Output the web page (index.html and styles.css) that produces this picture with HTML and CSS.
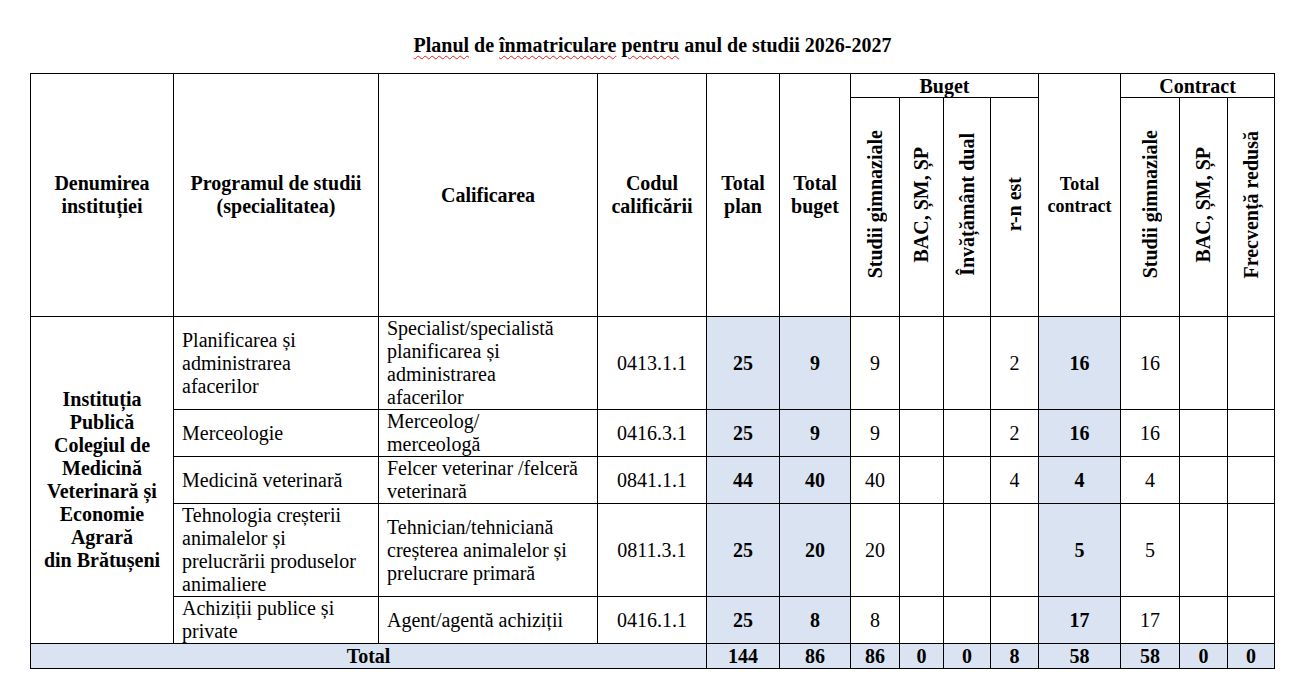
FILE: index.html
```html
<!DOCTYPE html>
<html lang="ro">
<head>
<meta charset="utf-8">
<title>Planul de înmatriculare</title>
<link rel="stylesheet" href="styles.css">
</head>
<body>
<div class="page">
  <h1 class="title"><span class="spell">Planul</span> de <span class="spell">înmatriculare</span> <span class="spell">pentru</span> anul de studii 2026-2027</h1>
  <table class="plan">
    <colgroup>
      <col class="c1"><col class="c2"><col class="c3"><col class="c4"><col class="c5"><col class="c6">
      <col class="c7"><col class="c8"><col class="c9"><col class="c10"><col class="c11">
      <col class="c12"><col class="c13"><col class="c14">
    </colgroup>
    <thead>
      <tr class="h1">
        <th rowspan="2">Denumirea instituției</th>
        <th rowspan="2">Programul de studii (specialitatea)</th>
        <th rowspan="2">Calificarea</th>
        <th rowspan="2">Codul calificării</th>
        <th rowspan="2">Total plan</th>
        <th rowspan="2">Total buget</th>
        <th colspan="4" class="group">Buget</th>
        <th rowspan="2" class="small">Total contract</th>
        <th colspan="3" class="group">Contract</th>
      </tr>
      <tr class="h2">
        <th class="vert"><span>Studii gimnaziale</span></th>
        <th class="vert"><span>BAC, ȘM, ȘP</span></th>
        <th class="vert"><span>Învățământ dual</span></th>
        <th class="vert"><span>r-n est</span></th>
        <th class="vert"><span>Studii gimnaziale</span></th>
        <th class="vert"><span>BAC, ȘM, ȘP</span></th>
        <th class="vert"><span>Frecvență redusă</span></th>
      </tr>
    </thead>
    <tbody>
      <tr class="r-tall">
        <th rowspan="5" class="inst">Instituția Publică Colegiul de Medicină Veterinară și Economie Agrară<br>din Brătușeni</th>
        <td class="txt">Planificarea și administrarea afacerilor</td>
        <td class="txt">Specialist/specialistă planificarea și administrarea<br>afacerilor</td>
        <td class="num">0413.1.1</td>
        <td class="num hl b">25</td>
        <td class="num hl b">9</td>
        <td class="num">9</td>
        <td class="num"></td>
        <td class="num"></td>
        <td class="num">2</td>
        <td class="num hl b">16</td>
        <td class="num">16</td>
        <td class="num"></td>
        <td class="num"></td>
      </tr>
      <tr class="r-short">
        <td class="txt">Merceologie</td>
        <td class="txt">Merceolog/<br>merceologă</td>
        <td class="num">0416.3.1</td>
        <td class="num hl b">25</td>
        <td class="num hl b">9</td>
        <td class="num">9</td>
        <td class="num"></td>
        <td class="num"></td>
        <td class="num">2</td>
        <td class="num hl b">16</td>
        <td class="num">16</td>
        <td class="num"></td>
        <td class="num"></td>
      </tr>
      <tr class="r-short">
        <td class="txt">Medicină veterinară</td>
        <td class="txt">Felcer veterinar /felceră veterinară</td>
        <td class="num">0841.1.1</td>
        <td class="num hl b">44</td>
        <td class="num hl b">40</td>
        <td class="num">40</td>
        <td class="num"></td>
        <td class="num"></td>
        <td class="num">4</td>
        <td class="num hl b">4</td>
        <td class="num">4</td>
        <td class="num"></td>
        <td class="num"></td>
      </tr>
      <tr class="r-tall">
        <td class="txt">Tehnologia creșterii animalelor și prelucrării produselor animaliere</td>
        <td class="txt">Tehnician/tehniciană creșterea animalelor și prelucrare primară</td>
        <td class="num">0811.3.1</td>
        <td class="num hl b">25</td>
        <td class="num hl b">20</td>
        <td class="num">20</td>
        <td class="num"></td>
        <td class="num"></td>
        <td class="num"></td>
        <td class="num hl b">5</td>
        <td class="num">5</td>
        <td class="num"></td>
        <td class="num"></td>
      </tr>
      <tr class="r-short">
        <td class="txt">Achiziții publice și private</td>
        <td class="txt">Agent/agentă achiziții</td>
        <td class="num">0416.1.1</td>
        <td class="num hl b">25</td>
        <td class="num hl b">8</td>
        <td class="num">8</td>
        <td class="num"></td>
        <td class="num"></td>
        <td class="num"></td>
        <td class="num hl b">17</td>
        <td class="num">17</td>
        <td class="num"></td>
        <td class="num"></td>
      </tr>
    </tbody>
    <tfoot>
      <tr class="total">
        <th colspan="4">Total</th>
        <td>144</td>
        <td>86</td>
        <td>86</td>
        <td>0</td>
        <td>0</td>
        <td>8</td>
        <td>58</td>
        <td>58</td>
        <td>0</td>
        <td>0</td>
      </tr>
    </tfoot>
  </table>
</div>
</body>
</html>
```

FILE: styles.css
```css
html, body {
  margin: 0;
  padding: 0;
  background: #ffffff;
}

body {
  font-family: "Liberation Serif", "Times New Roman", serif;
  color: #000;
}

.page {
  padding: 0 0 0 30px;
  width: 1245px;
}

.title {
  margin: 0 0 16px 0;
  padding-top: 34px;
  font-size: 20px;
  line-height: 23px;
  font-weight: bold;
  text-align: center;
}

.spell {
  text-decoration: underline wavy #e02020;
  text-decoration-thickness: 1px;
  text-underline-offset: 3px;
}

.plan {
  width: 1245px;
  table-layout: fixed;
  border-collapse: collapse;
  font-size: 20px;
  line-height: 23px;
}

.plan th,
.plan td {
  border: 1px solid #000;
  padding: 0 8px;
  vertical-align: middle;
}

.plan th {
  font-weight: bold;
  text-align: center;
}

.c1 { width: 143px; }
.c2 { width: 205px; }
.c3 { width: 219px; }
.c4 { width: 109px; }
.c5 { width: 73px; }
.c6 { width: 71px; }
.c7 { width: 49px; }
.c8 { width: 44px; }
.c9 { width: 47px; }
.c10 { width: 48px; }
.c11 { width: 82px; }
.c12 { width: 59px; }
.c13 { width: 48px; }
.c14 { width: 47px; }

.h1 { height: 24px; }
.h1 .group { line-height: 22px; }
.h2 { height: 219px; }

.small {
  font-size: 18px;
  line-height: 22px;
}

.vert {
  padding: 0;
}

.vert span {
  display: inline-block;
  writing-mode: vertical-rl;
  transform: rotate(180deg);
  white-space: nowrap;
}

.r-tall { height: 93px; }
.r-short { height: 47px; }

.inst {
  padding: 0 8px;
}

.txt {
  text-align: left;
}

.num {
  text-align: center;
}

.b { font-weight: bold; }

.hl {
  background: #dae3f1;
}

.total {
  height: 25px;
  background: #dae3f1;
  font-weight: bold;
}

.total td,
.total th {
  text-align: center;
  font-weight: bold;
  line-height: 22px;
}
```
